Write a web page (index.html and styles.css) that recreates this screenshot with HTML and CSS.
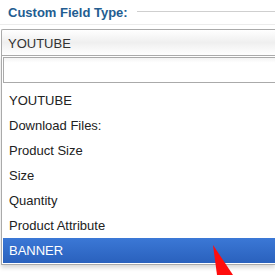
FILE: index.html
```html
<!DOCTYPE html>
<html>
<head>
<meta charset="utf-8">
<link rel="stylesheet" href="styles.css">
</head>
<body>
<div class="page">
  <div class="legend">
    <span class="legend-text">Custom Field Type:</span>
    <span class="legend-line"></span>
  </div>
  <div class="select">
    <div class="choice">YOUTUBE</div>
    <div class="drop">
      <div class="search"><input type="text" class="search-input"></div>
      <ul class="results">
        <li class="opt">YOUTUBE</li>
        <li class="opt">Download Files:</li>
        <li class="opt">Product Size</li>
        <li class="opt">Size</li>
        <li class="opt">Quantity</li>
        <li class="opt">Product Attribute</li>
        <li class="opt active">BANNER</li>
      </ul>
    </div>
  </div>
  <svg class="arrow" width="30" height="30" viewBox="0 0 30 30">
    <polygon points="0,0 20,30 4,30" fill="#ff0d0d"/>
  </svg>
</div>
</body>
</html>
```
FILE: styles.css
```css
html, body {
  margin: 0;
  padding: 0;
  background: #ffffff;
  overflow: hidden;
}
.page {
  position: relative;
  width: 275px;
  height: 275px;
  overflow: hidden;
  font-family: "Liberation Sans", Arial, sans-serif;
}
.legend {
  display: flex;
  align-items: center;
  height: 24px;
  padding: 0 0 0 8px;
  border-bottom: 1px solid #ececec;
  margin-bottom: 4px;
}
.legend-text {
  font-weight: bold;
  font-size: 13px;
  color: #235d91;
}
.legend-line {
  flex: 1;
  height: 1px;
  background: #cfcfcf;
  margin-left: 9px;
  margin-top: -2px;
}
.select {
  width: 274px;
  margin-left: 1px;
}
.choice {
  height: 25px;
  line-height: 27px;
  border: 1px solid #aaaaaa;
  border-right: none;
  border-bottom: none;
  padding-left: 6px;
  font-size: 13px;
  color: #333333;
  background: linear-gradient(to bottom, #ffffff 0%, #efefef 50%, #f7f7f7 75%, #ffffff 100%);
  border-radius: 2px 0 0 0;
}
.drop {
  border: 1px solid #aaaaaa;
  border-right: none;
  background: #ffffff;
  box-shadow: 0 3px 4px rgba(0, 0, 0, 0.15);
  padding-bottom: 1px;
}
.search {
  padding: 1px 0 0 1px;
}
.search-input {
  display: block;
  box-sizing: border-box;
  width: 100%;
  height: 26px;
  margin: 0;
  border: 1px solid #aaaaaa;
  border-right: none;
  background: linear-gradient(to bottom, #f4f4f4 0%, #ffffff 20%);
  outline: none;
}
.results {
  list-style: none;
  margin: 5px 0 0 1px;
  padding: 0;
}
.opt {
  height: 25px;
  line-height: 25px;
  padding-left: 6px;
  font-size: 13px;
  color: #222222;
}
.opt.active {
  background: linear-gradient(to bottom, #3b78d6 0%, #2a61bd 100%);
  color: #ffffff;
}
.arrow {
  position: absolute;
  left: 213px;
  top: 245px;
}
```
